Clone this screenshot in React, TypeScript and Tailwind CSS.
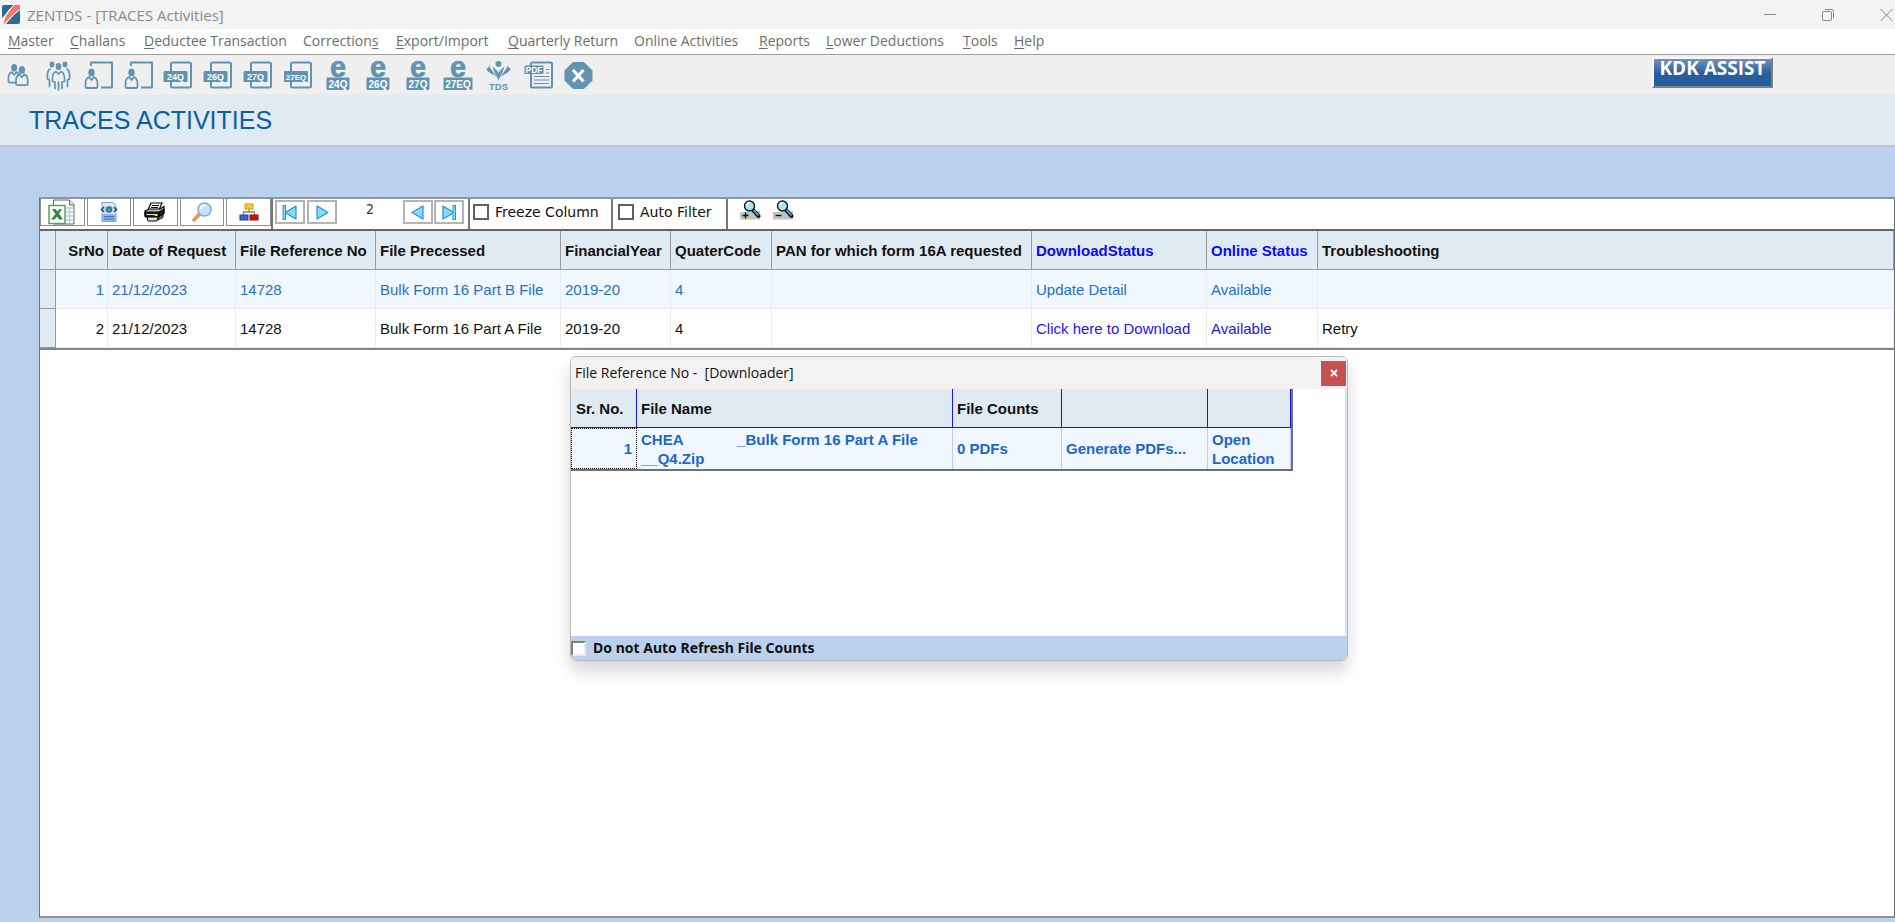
import type { ReactNode } from "react";

const INK = "#6193b3";

function Person({ x, y, s = 1 }: { x: number; y: number; s?: number }) {
  return (
    <g transform={`translate(${x} ${y}) scale(${s})`}>
      <path
        d="M4.500 8.500C2 9.500 1 12 1 15v3.200c0 .8.6 1.300 1.400 1.300h9.200c.8 0 1.400-.500 1.400-1.300V15c0-3-1-5.500-3.500-6.500L7 11.500z"
        fill="#efefef"
        stroke={INK}
        strokeWidth="1.800"
        strokeLinejoin="round"
      />
      <ellipse cx="7" cy="4" rx="3.200" ry="4" fill={INK} />
    </g>
  );
}

function TwoPeople() {
  return (
    <>
      <Person x={7.5} y={9} s={0.95} />
      <Person x={15} y={11} s={0.98} />
    </>
  );
}

function Crowd() {
  return (
    <g fill="none" stroke={INK} strokeWidth="1.700" strokeLinejoin="round" strokeLinecap="round">
      <ellipse cx="12" cy="9.500" rx="2.400" ry="3" fill={INK} stroke="none" />
      <ellipse cx="25" cy="9.500" rx="2.400" ry="3" fill={INK} stroke="none" />
      <path d="M10 14c-2 1-3 4-2.500 10l2 1v6.500M27 14c2 1 3 4 2.500 10l-2 1v6.500" />
      <ellipse cx="18.500" cy="11.500" rx="2.800" ry="3.500" fill={INK} stroke="none" />
      <path d="M16 16.500c-3 1-4 4-3.500 10l2.500.500v6.500M22 33.500V27l2.500-.500c.500-6-.500-9-3.500-10l-2.500 2.500-2.500-2.500M18.500 27v8" />
    </g>
  );
}

function PersonBoard() {
  return (
    <>
      <path d="M11 11V7.500h21v25H21" fill="none" stroke={INK} strokeWidth="2" strokeLinejoin="round" />
      <Person x={4.5} y={13.5} s={1} />
    </>
  );
}

function FormIcon({ label }: { label: string }) {
  const wide = label.length > 3;
  return (
    <>
      <rect x="11" y="7.500" width="20" height="25" rx="1.500" fill="none" stroke={INK} strokeWidth="2" />
      <rect x={wide ? 4 : 3.5} y="16" width="24" height="11" rx="1" fill={INK} />
      <text
        x={wide ? 16 : 15.5}
        y="24.500"
        fontSize={wide ? 8 : 9}
        textAnchor="middle"
        fill="#fff"
        fontWeight="700"
        fontFamily="Liberation Sans, sans-serif"
      >
        {label}
      </text>
    </>
  );
}

function EFormIcon({ label }: { label: string }) {
  const w = label.length > 3 ? 29 : 23;
  return (
    <>
      <text
        x="18"
        y="21.500"
        fontSize="29"
        textAnchor="middle"
        fill={INK}
        stroke={INK}
        strokeWidth=".6"
        fontWeight="700"
        fontFamily="Liberation Sans, sans-serif"
      >
        e
      </text>
      <rect x={18 - w / 2} y="22.500" width={w} height="12.500" rx="1" fill={INK} />
      <text x="18" y="32.500" fontSize="10" textAnchor="middle" fill="#fff" fontWeight="700" fontFamily="Liberation Sans, sans-serif">
        {label}
      </text>
    </>
  );
}

function TdsIcon() {
  return (
    <>
      <circle cx="18.500" cy="9" r="3" fill={INK} />
      <path d="M18.500 26C17 20 14 18 12.500 11c2 3 5 4 6 7 1-3 4-4 6-7-1.500 7-4.500 9-6 15z" fill={INK} />
      <path
        d="M9.500 9C8.500 13 14 17 17.500 23c-3-4-9-4-11.500-9.500C8 14 9 12 9.500 9zM27.500 9c1 4-4.500 8-8 14 3-4 9-4 11.500-9.500-2 .500-3-1.500-3.500-4.500z"
        fill={INK}
      />
      <text x="18.500" y="35" fontSize="9.500" textAnchor="middle" fill={INK} fontWeight="700" fontFamily="Liberation Sans, sans-serif">
        TDS
      </text>
    </>
  );
}

function PdfIcon() {
  return (
    <>
      <rect x="11" y="7.500" width="21" height="25" rx="1" fill="none" stroke={INK} strokeWidth="2" />
      <path d="M14 21.500h15M14 25h15M14 28.500h15M26 14.500h3M26 18h3" stroke={INK} strokeWidth="1.200" />
      <rect x="4.500" y="10.500" width="19" height="8.500" rx="1" fill={INK} />
      <text x="14" y="18" fontSize="8.500" textAnchor="middle" fill="#fff" fontWeight="700" fontFamily="Liberation Sans, sans-serif">
        PDF
      </text>
    </>
  );
}

function CloseIcon() {
  return (
    <>
      <path d="M13 7.500h11l8 8v10l-8 8H13l-8-8v-10z" fill={INK} stroke={INK} strokeWidth="1" strokeLinejoin="round" />
      <path d="M13 15l10.500 11.500M23.500 15L13 26.500" stroke="#fff" strokeWidth="3.200" />
    </>
  );
}

const tools: { name: string; icon: ReactNode }[] = [
  { name: "Deductors", icon: <TwoPeople /> },
  { name: "Deductees", icon: <Crowd /> },
  { name: "Employee master", icon: <PersonBoard /> },
  { name: "Deductee master", icon: <PersonBoard /> },
  { name: "Form 24Q", icon: <FormIcon label="24Q" /> },
  { name: "Form 26Q", icon: <FormIcon label="26Q" /> },
  { name: "Form 27Q", icon: <FormIcon label="27Q" /> },
  { name: "Form 27EQ", icon: <FormIcon label="27EQ" /> },
  { name: "E-return 24Q", icon: <EFormIcon label="24Q" /> },
  { name: "E-return 26Q", icon: <EFormIcon label="26Q" /> },
  { name: "E-return 27Q", icon: <EFormIcon label="27Q" /> },
  { name: "E-return 27EQ", icon: <EFormIcon label="27EQ" /> },
  { name: "TDS", icon: <TdsIcon /> },
  { name: "PDF", icon: <PdfIcon /> },
  { name: "Close", icon: <CloseIcon /> },
];

const menu: { before?: string; key?: string; after: string; width: string }[] = [
  { key: "M", after: "aster", width: "w-[62px]" },
  { key: "C", after: "hallans", width: "w-[74px]" },
  { key: "D", after: "eductee Transaction", width: "w-[159px]" },
  { before: "Correction", key: "s", after: "", width: "w-[93px]" },
  { key: "E", after: "xport/Import", width: "w-[112px]" },
  { key: "Q", after: "uarterly Return", width: "w-[126px]" },
  { after: "Online Activities", width: "w-[125px]" },
  { key: "R", after: "eports", width: "w-[67px]" },
  { key: "L", after: "ower Deductions", width: "w-[137px]" },
  { key: "T", after: "ools", width: "w-[51px]" },
  { key: "H", after: "elp", width: "w-[51px]" },
];

function ExcelIcon() {
  return (
    <svg width="28" height="26" viewBox="0 0 28 26" aria-hidden="true">
      <path d="M5.500 1h16l4.500 4.500V25H5.500z" fill="#fbfcfd" stroke="#666" />
      <path d="M21.500 1v5H26" fill="#d9e2ea" stroke="#666" />
      <path d="M18 9h7M18 13h7M18 17h7M18 21h7M21.500 8v16" stroke="#b9cfe4" strokeWidth="1.500" />
      <rect x="1" y="6.500" width="16" height="18" fill="#fff" stroke="#5aa05a" strokeWidth="1.500" />
      <path d="M4 10h3.500l2 2.500 2-2.500H14l-3 4.500 4 6h-4L9 17.500 6.500 20.500H3l4.500-5.500z" fill="#2f8a3a" />
    </svg>
  );
}

function HtmlIcon() {
  return (
    <svg width="18" height="20" viewBox="0 0 18 20" aria-hidden="true">
      <path d="M2 .5h11l3 3v16H2z" fill="#dce9f8" stroke="#7f9cc4" />
      <rect x="1" y="4" width="16" height="7" fill="#c8dcf5" />
      <path d="M4 5L1.500 7.500 4 10M14 5l2.500 2.500L14 10" fill="none" stroke="#1d3f86" strokeWidth="1.500" />
      <circle cx="9" cy="7.500" r="3.300" fill="#2f6fc0" />
      <path d="M7 6l3-1 1 2-2 3-2-2z" fill="#48a848" />
      <path d="M2 12h14v7.500H2z" fill="#8fb4e6" />
      <path d="M4 14.500h10M4 17h10" stroke="#3f6fb8" />
    </svg>
  );
}

function PrinterIcon() {
  return (
    <svg width="22" height="20" viewBox="0 0 22 20" aria-hidden="true">
      <path d="M7 1h11l-3 7H4z" fill="#fff" stroke="#000" strokeWidth="1.200" />
      <path d="M8 3.500h7M7 5.500h7" stroke="#000" />
      <path d="M1 9l4-2h11l4-2.500V10l-5 3H1z" fill="#bdbdbd" stroke="#000" strokeWidth="1.200" />
      <path d="M1 10h14v5H1zM15 10l5-3v5l-5 3z" fill="#222" stroke="#000" />
      <path d="M3 15h11l-1 4H4z" fill="#ddd" stroke="#000" />
      <path d="M15 15l4-2.500v3L14 18z" fill="#777" stroke="#000" strokeWidth=".8" />
      <path d="M2.500 12.500h9" stroke="#ddd" />
      <path d="M10.500 13h3" stroke="#f2e200" strokeWidth="2" />
    </svg>
  );
}

function SearchIcon() {
  return (
    <svg width="21" height="20" viewBox="0 0 21 20" aria-hidden="true">
      <path d="M7.500 12L2 18" stroke="#e8973a" strokeWidth="3.500" strokeLinecap="round" />
      <circle cx="12.500" cy="7.500" r="6.500" fill="#c5e4fb" stroke="#7facd8" strokeWidth="1.500" />
      <path d="M8.500 7a4.500 4.500 0 0 1 5-3.800" fill="none" stroke="#fff" strokeWidth="2" />
    </svg>
  );
}

function TreeIcon() {
  return (
    <svg width="20" height="18" viewBox="0 0 20 18" aria-hidden="true">
      <path d="M10 6v3M4.500 12V9h11v3" fill="none" stroke="#8a8a5a" strokeWidth="1.300" />
      <rect x="6" y="1" width="8" height="5" fill="#f3c934" stroke="#d39a10" />
      <rect x="1" y="12" width="8" height="5" fill="#3a62d0" stroke="#1e3fa0" />
      <rect x="11" y="12" width="8" height="5" fill="#cf1010" stroke="#9c0808" />
    </svg>
  );
}

function NavIcon({ dir, bar }: { dir: "left" | "right"; bar?: boolean }) {
  const pts = dir === "left" ? "14,2 14,15 3,8.500" : "3,2 3,15 14,8.500";
  return (
    <svg width="17" height="17" viewBox="0 0 17 17" aria-hidden="true">
      <polygon points={pts} fill="#7fdcfa" stroke="#2e8fce" strokeWidth="1.200" strokeLinejoin="round" />
      {bar && <rect x={dir === "left" ? 1 : 13} y="1.500" width="2.500" height="14" fill="#7fdcfa" stroke="#2e8fce" />}
    </svg>
  );
}

function ZoomIcon({ plus }: { plus?: boolean }) {
  return (
    <svg width="21" height="20" viewBox="0 0 21 20" aria-hidden="true">
      <path d="M0 12h12l8-1v8.500H0z" fill="#c2c2c2" />
      <path d="M13 10l5.500 6" stroke="#111" strokeWidth="4" strokeLinecap="round" />
      <path d="M13.500 10l5 5.500" stroke="#6fb6ea" strokeWidth="1.500" />
      <circle cx="9.500" cy="6" r="5" fill="#a9e3fa" stroke="#111" strokeWidth="1.400" />
      <path d="M6.500 5.500a3.500 3.500 0 0 1 3-2.800" stroke="#fff" strokeWidth="1.800" fill="none" />
      <path d={plus ? "M2.500 15.500h6M5.500 12.500v6" : "M2.500 15.500h6"} stroke="#111" strokeWidth="1.400" />
    </svg>
  );
}

const exportTools = [
  { name: "Export to Excel", icon: <ExcelIcon /> },
  { name: "Export to HTML", icon: <HtmlIcon /> },
  { name: "Print", icon: <PrinterIcon /> },
  { name: "Find", icon: <SearchIcon /> },
  { name: "Group", icon: <TreeIcon /> },
];

function NavButton({ name, children }: { name: string; children: ReactNode }) {
  return (
    <button aria-label={name} className="flex h-6 w-[30px] items-center justify-center border-2 border-[#b4b4b4] bg-white">
      {children}
    </button>
  );
}

function GridCheck({ id, label }: { id: string; label: string }) {
  return (
    <div className="flex items-center gap-[6px]">
      <input id={id} type="checkbox" className="size-4 appearance-none border-2 border-[#5f5f5f] bg-white checked:bg-[#5f5f5f]" />
      <label htmlFor={id} className="font-['DejaVu_Sans',sans-serif] text-sm text-[#111]">
        {label}
      </label>
    </div>
  );
}

const columns: { title: string; width: string; cls: string }[] = [
  { title: "SrNo", width: "w-[52px]", cls: "text-right" },
  { title: "Date of Request", width: "w-[128px]", cls: "text-left" },
  { title: "File Reference No", width: "w-[140px]", cls: "text-left" },
  { title: "File Precessed", width: "w-[185px]", cls: "text-left" },
  { title: "FinancialYear", width: "w-[110px]", cls: "text-left" },
  { title: "QuaterCode", width: "w-[101px]", cls: "text-left" },
  { title: "PAN for which form 16A requested", width: "w-[260px]", cls: "text-left" },
  { title: "DownloadStatus", width: "w-[175px]", cls: "text-left text-[#0b0bf5]" },
  { title: "Online Status", width: "w-[111px]", cls: "text-left text-[#0b0bf5]" },
  { title: "Troubleshooting", width: "", cls: "text-left" },
];

const rows = [
  ["1", "21/12/2023", "14728", "Bulk Form 16 Part B File", "2019-20", "4", "", "Update Detail", "Available", ""],
  ["2", "21/12/2023", "14728", "Bulk Form 16 Part A File", "2019-20", "4", "", "Click here to Download", "Available", "Retry"],
];

function Downloader() {
  return (
    <section
      role="dialog"
      aria-label="Downloader"
      className="absolute top-[157px] left-[530px] flex h-[305px] w-[778px] flex-col overflow-hidden rounded-md border border-[#b9b9b9] bg-white shadow-[0_10px_16px_rgba(0,0,0,0.16)]"
    >
      <header className="flex h-8 shrink-0 items-center justify-between bg-[#f2f2f2] pr-px pl-1">
        <h2 className="font-['Open_Sans',sans-serif] text-sm whitespace-pre text-[#111]">{"File Reference No -  [Downloader]"}</h2>
        <button aria-label="Close dialog" className="flex size-[25px] items-center justify-center bg-[#c75050]">
          <svg width="8" height="8" viewBox="0 0 8 8" aria-hidden="true">
            <path d="M1 1l6 6M7 1L1 7" stroke="#fff" strokeWidth="1.800" />
          </svg>
        </button>
      </header>
      <div className="grow border-r-2 border-[#d5e3f5]">
        <table className="w-[722px] table-fixed border-separate border-spacing-0 border-r-2 border-b-2 border-[#70707c] text-left text-[15px] leading-[19px] font-bold">
          <colgroup>
            <col className="w-[66px]" />
            <col className="w-[316px]" />
            <col className="w-[109px]" />
            <col className="w-[146px]" />
            <col />
          </colgroup>
          <thead>
            <tr className="h-[39px] bg-[#e0eaf3] text-[#111]">
              {["Sr. No.", "File Name", "File Counts", "", ""].map((t, i) => (
                <th key={i} className="border-r border-b border-[#1414f5] pt-px pr-1 pl-1 first:pl-[5px]">
                  {t}
                </th>
              ))}
            </tr>
          </thead>
          <tbody>
            <tr className="h-[41px] bg-[#f0f7fe] text-[#1c66cc]">
              <td className="border border-dotted border-black pr-1 text-right">1</td>
              <td className="border-r border-[#c6c6fa] pl-1 whitespace-pre">{"CHEA             _Bulk Form 16 Part A File\n__Q4.Zip"}</td>
              <td className="border-r border-[#c6c6fa] pl-1">0 PDFs</td>
              <td className="border-r border-[#c6c6fa] pl-1">
                <a href="#generate">Generate PDFs...</a>
              </td>
              <td className="border-r border-[#c6c6fa] pl-1">
                <a href="#location">Open Location</a>
              </td>
            </tr>
          </tbody>
        </table>
      </div>
      <footer className="flex h-6 shrink-0 items-center gap-[7px] bg-[#bbd0ec]">
        <input
          id="no-refresh"
          type="checkbox"
          className="size-[15px] appearance-none border-2 border-t-[#808080] border-r-[#e8e8e8] border-b-[#e8e8e8] border-l-[#808080] bg-white checked:bg-[#444]"
        />
        <label htmlFor="no-refresh" className="font-['Noto_Sans',sans-serif] text-sm leading-none font-bold text-[#111]">
          Do not Auto Refresh File Counts
        </label>
      </footer>
    </section>
  );
}

export default function App() {
  return (
    <div className="flex min-h-screen flex-col overflow-hidden bg-[#bbd0ec] font-['Liberation_Sans',Arial,sans-serif]">
      <header className="flex h-[29px] items-center justify-between bg-[#f3f3f3] pl-[2px]">
        <div className="flex items-center gap-[7px]">
          <svg width="18" height="19" viewBox="0 0 18 19" aria-hidden="true">
            <path d="M2 0h10L8 4 3.500 9.500 0 13V2q0-2 2-2z" fill="#2c6a94" />
            <path d="M16 19H4l5-6 5-5 4-4v13q0 2-2 2z" fill="#2c6a94" />
            <path d="M12 0h6v4l-6 5-9 9.500-2-.5 3-7z" fill="#fb7467" />
            <path d="M12 0L7 5l-4 6-2 7M18 4.500L12 9l-9 9.500" fill="none" stroke="#fff" strokeWidth="1" />
          </svg>
          <h1 className="font-['Open_Sans',sans-serif] text-[15px] leading-5 text-[#8a8a8a]">ZENTDS - [TRACES Activities]</h1>
        </div>
        <div className="flex items-center gap-[46px] pr-px text-[#888]">
          <button aria-label="Minimize">
            <svg width="12" height="12" viewBox="0 0 12 12" fill="none" stroke="currentColor">
              <path d="M0 5.500h12" />
            </svg>
          </button>
          <button aria-label="Restore">
            <svg width="12" height="12" viewBox="0 0 12 12" fill="none" stroke="currentColor">
              <rect x=".5" y="2.500" width="9" height="9" rx="1.500" />
              <path d="M3 .5h6.500q2 0 2 2V9" />
            </svg>
          </button>
          <button aria-label="Close" className="pr-px">
            <svg width="13" height="12" viewBox="0 0 13 12" fill="none" stroke="currentColor">
              <path d="M.5 0l12 12M12.500 0L.5 12" />
            </svg>
          </button>
        </div>
      </header>

      <nav className="flex h-[26px] items-center border-b border-[#a0a0a0] bg-white pb-px pl-2 font-['Open_Sans',sans-serif] text-sm text-[#6d6d6d]">
        {menu.map((m, i) => (
          <a key={i} href="#menu" className={`${m.width} shrink-0 whitespace-nowrap`}>
            {m.before}
            {m.key && <span className="underline underline-offset-2">{m.key}</span>}
            {m.after}
          </a>
        ))}
      </nav>

      <div className="flex h-10 items-start justify-between bg-[#efefef]">
        <div className="flex">
          {tools.map((t) => (
            <button key={t.name} aria-label={t.name} className="size-10">
              <svg width="40" height="40" viewBox="0 0 40 40" className="overflow-visible" aria-hidden="true">
                {t.icon}
              </svg>
            </button>
          ))}
        </div>
        <button className="mt-[2px] mr-[122px] flex h-[31px] w-[121px] items-center justify-center border-2 border-t-[#f8f8f8] border-r-[#808080] border-b-[#808080] border-l-[#f8f8f8] bg-linear-to-b from-[#6e92bf] to-[#265d9c] to-55% pb-2 font-['Open_Sans',sans-serif] text-[19px] leading-none font-bold whitespace-nowrap text-white">
          KDK ASSIST
        </button>
      </div>

      <div className="flex h-[52px] items-center border-b-2 border-[#bdc7d3] bg-[#e0eaf3] pb-px pl-[29px]">
        <h2 className="text-[25px] leading-8 text-[#0a5fa3]">TRACES ACTIVITIES</h2>
      </div>

      <main className="relative mt-[50px] mb-1 ml-[39px] flex grow flex-col border-t-2 border-r border-b-2 border-l border-t-[#8e959e] border-r-[#707070] border-b-[#8f9297] border-l-[#707070] bg-white">
        <div className="flex h-8 shrink-0 border-b-2 border-[#666]">
          <div className="flex w-[233px] gap-[2px] border-r-2 border-[#777]">
            {exportTools.map((t) => (
              <button
                key={t.name}
                aria-label={t.name}
                className="flex h-[27px] w-[45px] items-center justify-center border border-t-0 border-[#8d8d8d] bg-white"
              >
                {t.icon}
              </button>
            ))}
          </div>
          <div className="flex w-[197px] items-start justify-between border-r-2 border-[#777] pt-px pr-1 pl-[2px]">
            <div className="flex gap-[2px]">
              <NavButton name="First">
                <NavIcon dir="left" bar />
              </NavButton>
              <NavButton name="Next">
                <NavIcon dir="right" />
              </NavButton>
            </div>
            <output className="font-['DejaVu_Sans_Condensed','DejaVu_Sans',sans-serif] text-sm leading-[18px] text-[#333]">2</output>
            <div className="flex gap-px">
              <NavButton name="Previous">
                <NavIcon dir="left" />
              </NavButton>
              <NavButton name="Last">
                <NavIcon dir="right" bar />
              </NavButton>
            </div>
          </div>
          <div className="flex w-[143px] border-r-2 border-[#777] pb-1 pl-[3px]">
            <GridCheck id="freeze" label="Freeze Column" />
          </div>
          <div className="flex w-[115px] border-r-2 border-[#777] pb-1 pl-[5px]">
            <GridCheck id="filter" label="Auto Filter" />
          </div>
          <div className="flex items-start gap-3 pt-px pl-3">
            <button aria-label="Zoom in">
              <ZoomIcon plus />
            </button>
            <button aria-label="Zoom out">
              <ZoomIcon />
            </button>
          </div>
        </div>

        <table className="w-full table-fixed border-separate border-spacing-0 border-b-2 border-[#858585] text-[15px] leading-5">
          <colgroup>
            <col className="w-4" />
            {columns.map((c) => (
              <col key={c.title} className={c.width} />
            ))}
          </colgroup>
          <thead>
            <tr className="h-[39px] bg-[#e0eaf3] text-[#111]">
              <th aria-label="Row marker" className="border-r border-b border-[#999]" />
              {columns.map((c) => (
                <th key={c.title} className={`border-r border-b border-[#999] pt-[2px] pr-[3px] pl-1 font-bold whitespace-nowrap ${c.cls}`}>
                  {c.title}
                </th>
              ))}
            </tr>
          </thead>
          <tbody>
            {rows.map((r, ri) => (
              <tr key={r[0]} className={ri === 0 ? "h-[39px] bg-[#f0f7fe] text-[#2470cf]" : "h-[39px] bg-white text-[#111]"}>
                <td className="border-r border-b border-[#999] bg-[#e0eaf3]" />
                {r.map((v, i) => (
                  <td
                    key={i}
                    className={`border-r border-b border-[#ececf0] pt-[2px] pr-[3px] pl-1 whitespace-nowrap ${i === 0 ? "text-right" : ""} ${
                      ri === 1 && (i === 7 || i === 8) ? "text-[#2a12ee]" : ""
                    }`}
                  >
                    {i >= 7 && v ? <a href="#action">{v}</a> : v}
                  </td>
                ))}
              </tr>
            ))}
          </tbody>
        </table>

        <Downloader />
      </main>
    </div>
  );
}
